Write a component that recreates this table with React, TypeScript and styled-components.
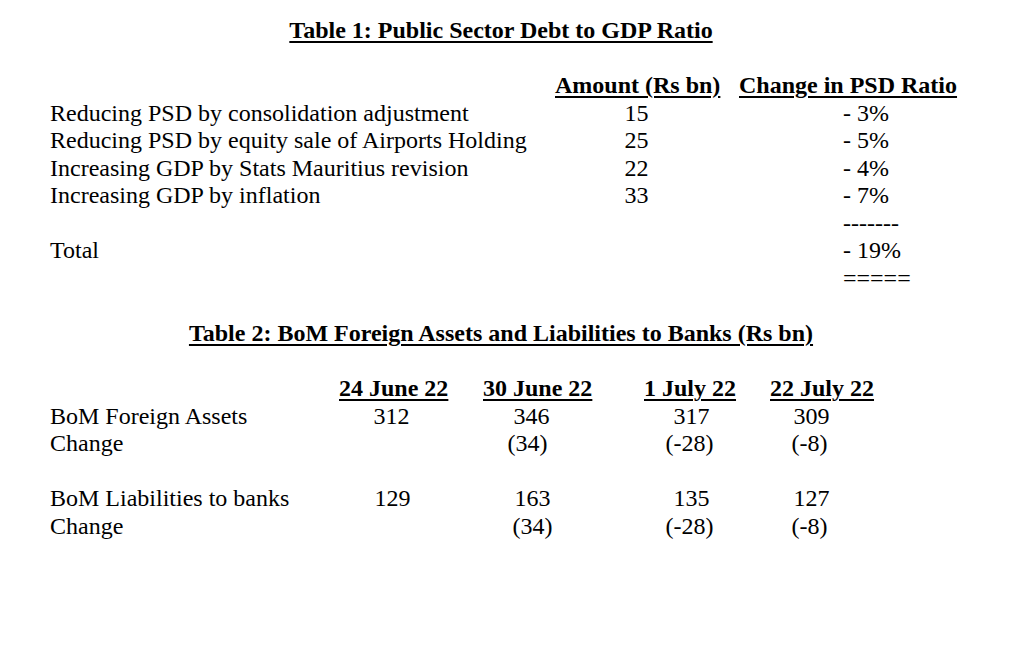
import React from "react";
import styled, { createGlobalStyle } from "styled-components";

const Global = createGlobalStyle`
  html, body { margin: 0; padding: 0; background: #fff; }
  body { font-family: "Liberation Serif", "Times New Roman", serif; color: #000; }
`;

const Page = styled.div`
  width: 1036px;
  height: 645px;
  box-sizing: border-box;
  padding: 17px 0 0 50px;
  font-size: 24px;
  line-height: 27.55px;
  overflow: hidden;
`;

const Title = styled.div`
  width: 902px;
  text-align: center;
  font-weight: bold;
  text-decoration: underline;
  text-decoration-thickness: 2px;
  text-underline-offset: 3px;
`;

const Blank = styled.div`
  height: 27.55px;
`;

const Grid1 = styled.div`
  display: grid;
  grid-template-columns: 505px 161px 23px 220px;
`;

const Grid2 = styled.div`
  display: grid;
  grid-template-columns: 289px 107px 37px 109px 52px 91px 35px 103px;
`;

const Label = styled.div<{ $col?: number }>`
  grid-column: 1;
  white-space: nowrap;
`;

const Head = styled.div<{ $col: number }>`
  grid-column: ${(p) => p.$col};
  font-weight: bold;
  text-decoration: underline;
  text-decoration-thickness: 2px;
  text-underline-offset: 3px;
  white-space: nowrap;
`;

const Num = styled.div<{ $col: number; $shift?: number }>`
  grid-column: ${(p) => p.$col};
  text-align: center;
  white-space: nowrap;
  transform: translateX(${(p) => p.$shift ?? 0}px);
`;

const Change = styled.div<{ $col: number }>`
  grid-column: ${(p) => p.$col};
  padding-left: 104px;
  white-space: nowrap;
`;

const rows1 = [
  ["Reducing PSD by consolidation adjustment", "15", "- 3%"],
  ["Reducing PSD by equity sale of Airports Holding", "25", "- 5%"],
  ["Increasing GDP by Stats Mauritius revision", "22", "- 4%"],
  ["Increasing GDP by inflation", "33", "- 7%"],
];

const shifts2 = [-1, -6, 2, -10];

export default function App() {
  return (
    <>
      <Global />
      <Page>
        <Title>Table 1: Public Sector Debt to GDP Ratio</Title>
        <Blank />
        <Grid1>
          <Label />
          <Head $col={2}>Amount (Rs bn)</Head>
          <Head $col={4}>Change in PSD Ratio</Head>
          {rows1.map(([l, a, c]) => (
            <React.Fragment key={l}>
              <Label>{l}</Label>
              <Num $col={2} $shift={1}>{a}</Num>
              <Change $col={4}>{c}</Change>
            </React.Fragment>
          ))}
          <Label />
          <Change $col={4}>-------</Change>
          <Label>Total</Label>
          <Change $col={4}>- 19%</Change>
          <Label />
          <Change $col={4}>=====</Change>
        </Grid1>
        <Blank />
        <Title>Table 2: BoM Foreign Assets and Liabilities to Banks (Rs bn)</Title>
        <Blank />
        <Grid2>
          <Label />
          <Head $col={2}>24 June 22</Head>
          <Head $col={4}>30 June 22</Head>
          <Head $col={6}>1 July 22</Head>
          <Head $col={8}>22 July 22</Head>

          <Label>BoM Foreign Assets</Label>
          <Num $col={2} $shift={shifts2[0]}>312</Num>
          <Num $col={4} $shift={shifts2[1]}>346</Num>
          <Num $col={6} $shift={shifts2[2]}>317</Num>
          <Num $col={8} $shift={shifts2[3]}>309</Num>

          <Label>Change</Label>
          <Num $col={4} $shift={-10}>(34)</Num>
          <Num $col={6} $shift={0}>(-28)</Num>
          <Num $col={8} $shift={-12}>(-8)</Num>

          <Label>&nbsp;</Label>

          <Label>BoM Liabilities to banks</Label>
          <Num $col={2} $shift={0}>129</Num>
          <Num $col={4} $shift={-5}>163</Num>
          <Num $col={6} $shift={2}>135</Num>
          <Num $col={8} $shift={-10}>127</Num>

          <Label>Change</Label>
          <Num $col={4} $shift={-5}>(34)</Num>
          <Num $col={6} $shift={0}>(-28)</Num>
          <Num $col={8} $shift={-12}>(-8)</Num>
        </Grid2>
      </Page>
    </>
  );
}
